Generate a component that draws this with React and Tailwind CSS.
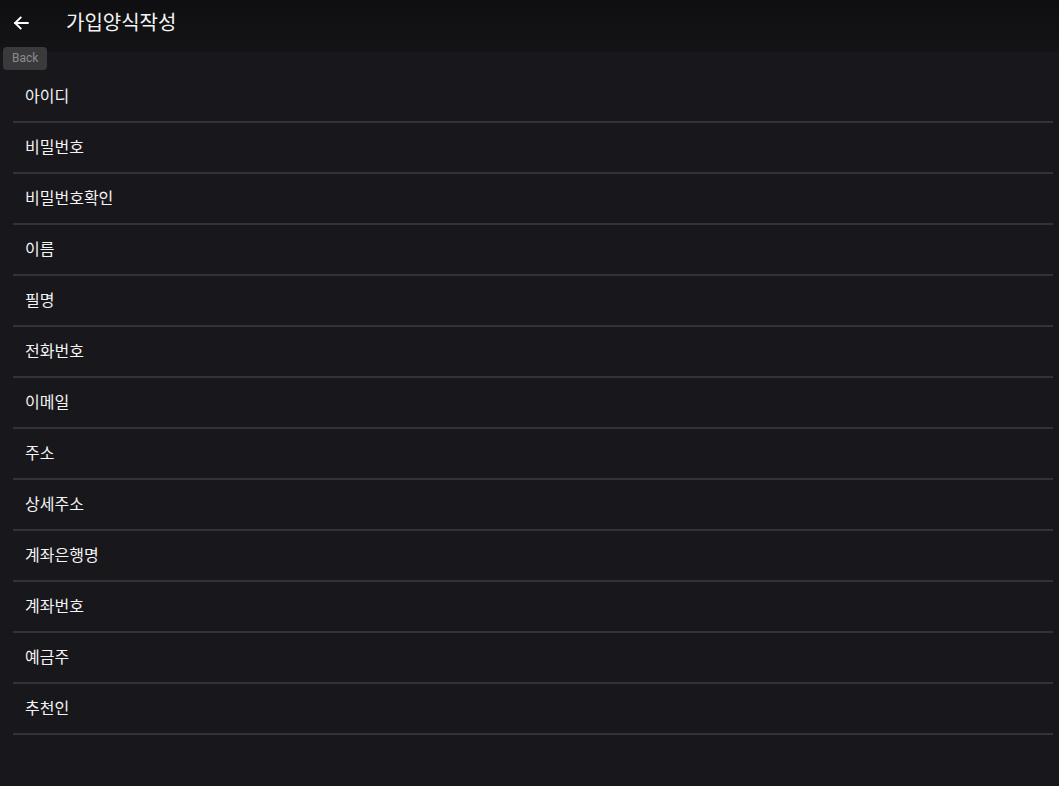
import React from "react";

const fields = [
  "아이디",
  "비밀번호",
  "비밀번호확인",
  "이름",
  "필명",
  "전화번호",
  "이메일",
  "주소",
  "상세주소",
  "계좌은행명",
  "계좌번호",
  "예금주",
  "추천인",
];

export default function App() {
  return (
    <div
      className="relative min-h-[786px] w-full bg-[#18171c] text-[#f2f2f2]"
      style={{ fontFamily: 'Roboto, "Noto Sans CJK KR", sans-serif' }}
    >
      <header className="flex h-[52px] items-start bg-gradient-to-b from-[#0f0f11] to-[#141416]">
        <button className="flex h-[46px] w-[42px] items-center justify-center text-white">
          <svg width="20" height="20" viewBox="0 0 24 24" fill="none" stroke="currentColor" strokeWidth="2.4" strokeLinecap="square">
            <path d="M20 12H5" />
            <path d="M11.5 5.5L5 12l6.5 6.5" />
          </svg>
        </button>
        <h1 className="ml-[24px] flex h-[46px] items-center text-[20px] leading-none font-normal text-[#f4f4f4]">가입양식작성</h1>
      </header>
      <div className="absolute left-[3px] top-[47px] rounded-[4px] bg-[#3a3a3d] px-[9px] py-[4px] text-[12px] leading-[15px] text-[#8b8b8e]">
        Back
      </div>
      <ul className="ml-[13px] mr-[6px] pt-[20px]">
        {fields.map((f) => (
          <li
            key={f}
            className="flex h-[51px] items-center border-b-2 border-[#333237] pl-[12px] text-[16px] text-[#f4f4f4]"
          >
            {f}
          </li>
        ))}
      </ul>
    </div>
  );
}
